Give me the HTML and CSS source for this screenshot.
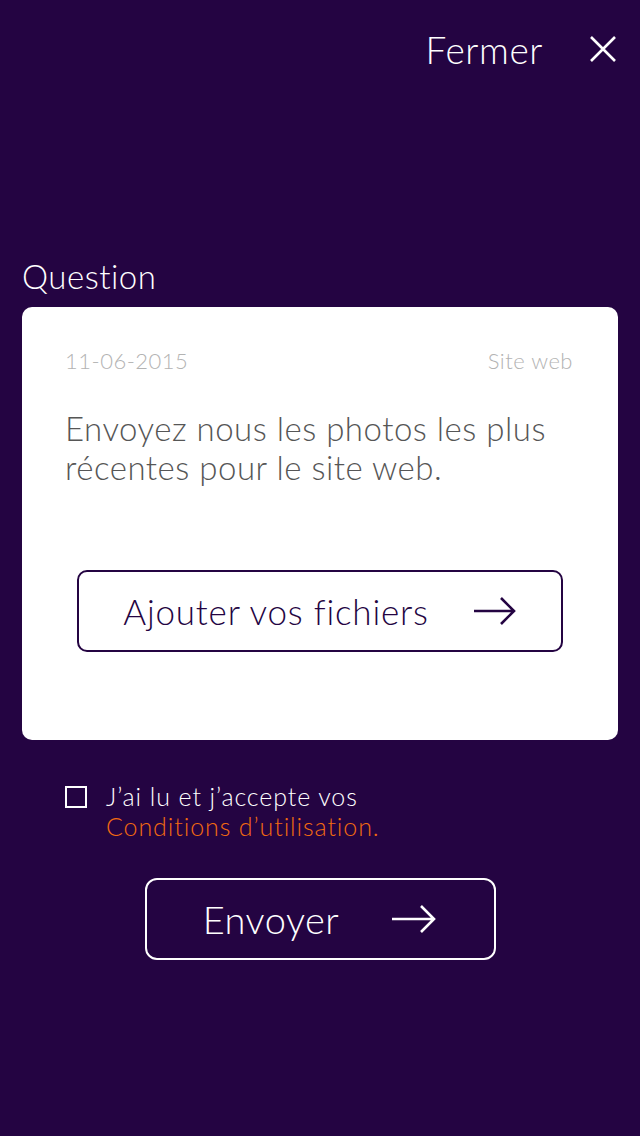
FILE: index.html
```html
<!DOCTYPE html>
<html lang="fr">
<head>
<meta charset="utf-8">
<title>Question</title>
<link rel="stylesheet" href="styles.css">
</head>
<body>
<div class="page">
  <header class="topbar">
    <span class="close-label">Fermer</span>
    <svg class="close-icon" width="28" height="28" viewBox="0 0 28 28" aria-hidden="true">
      <path d="M2 2 L26 26 M26 2 L2 26" stroke="#ffffff" stroke-width="2.6" fill="none" stroke-linecap="butt"/>
    </svg>
  </header>

  <h2 class="section-label">Question</h2>

  <section class="card">
    <div class="card-meta">
      <span class="meta-date">11-06-2015</span>
      <span class="meta-cat">Site web</span>
    </div>
    <p class="card-text">Envoyez nous les photos les plus récentes pour le site web.</p>
    <button class="btn btn-dark" type="button">
      <span>Ajouter vos fichiers</span>
      <svg class="arrow" width="44" height="30" viewBox="0 0 44 30" aria-hidden="true">
        <path d="M1 15 H41 M28 2 L41 15 L28 28" stroke="currentColor" stroke-width="2.6" fill="none" stroke-linejoin="miter"/>
      </svg>
    </button>
  </section>

  <div class="terms">
    <span class="checkbox"></span>
    <p class="terms-text">J’ai lu et j’accepte vos<br><a class="terms-link" href="#">Conditions d’utilisation.</a></p>
  </div>

  <div class="send-row">
    <button class="btn btn-light" type="button">
      <span>Envoyer</span>
      <svg class="arrow" width="46" height="30" viewBox="0 0 46 30" aria-hidden="true">
        <path d="M1 15 H43 M30 2 L43 15 L30 28" stroke="currentColor" stroke-width="2.6" fill="none" stroke-linejoin="miter"/>
      </svg>
    </button>
  </div>
</div>
</body>
</html>
```

FILE: styles.css
```css
* { box-sizing: border-box; }

html, body {
  margin: 0;
  padding: 0;
  background: #240442;
}

body {
  font-family: Lato, "Open Sans", "Liberation Sans", sans-serif;
  font-weight: 300;
  color: #ffffff;
  width: 640px;
  min-height: 1136px;
}

.page {
  padding: 0 22px;
}

.topbar {
  height: 98px;
  display: flex;
  align-items: center;
  justify-content: flex-end;
  gap: 46px;
  padding-right: 1px;
}

.close-label {
  font-size: 37px;
  letter-spacing: 0.6px;
  line-height: 1;
  color: #ffffff;
}

.close-icon {
  display: block;
}

.section-label {
  margin: 158px 0 0 0;
  font-size: 33px;
  letter-spacing: 0.5px;
  font-weight: 300;
  line-height: 40px;
  color: #ffffff;
}

.card {
  margin-top: 11px;
  background: #ffffff;
  border-radius: 10px;
  padding: 40px 45px 88px 43px;
  display: flex;
  flex-direction: column;
}

.card-meta {
  display: flex;
  justify-content: space-between;
  font-size: 22px;
  letter-spacing: 0.5px;
  line-height: 28px;
  color: #b3b3b3;
}

.card-text {
  margin: 34px 0 0 0;
  font-size: 33px;
  letter-spacing: 0.5px;
  line-height: 39px;
  color: #565656;
}

.btn {
  font-family: inherit;
  font-weight: 300;
  background: transparent;
  display: flex;
  align-items: center;
  justify-content: center;
  cursor: pointer;
}

.btn-dark {
  margin: 83px 10px 0 12px;
  height: 82px;
  border: 2px solid #240442;
  border-radius: 10px;
  color: #240442;
  font-size: 35px;
  letter-spacing: 0.8px;
  gap: 44px;
}

.btn-light {
  width: 351px;
  height: 82px;
  border: 2.5px solid #ffffff;
  border-radius: 12px;
  color: #ffffff;
  font-size: 38px;
  letter-spacing: 0.5px;
  gap: 52px;
}

.arrow {
  display: block;
}

.terms {
  display: flex;
  align-items: flex-start;
  gap: 19px;
  margin: 41px 0 0 43px;
}

.checkbox {
  width: 22px;
  height: 22px;
  border: 2px solid #ffffff;
  margin-top: 5px;
  flex: none;
}

.terms-text {
  margin: 0;
  font-size: 25px;
  letter-spacing: 0.9px;
  line-height: 30px;
  color: #ffffff;
}

.terms-link {
  color: #f26a10;
  text-decoration: none;
}

.send-row {
  display: flex;
  justify-content: center;
  margin-top: 37px;
}
```
